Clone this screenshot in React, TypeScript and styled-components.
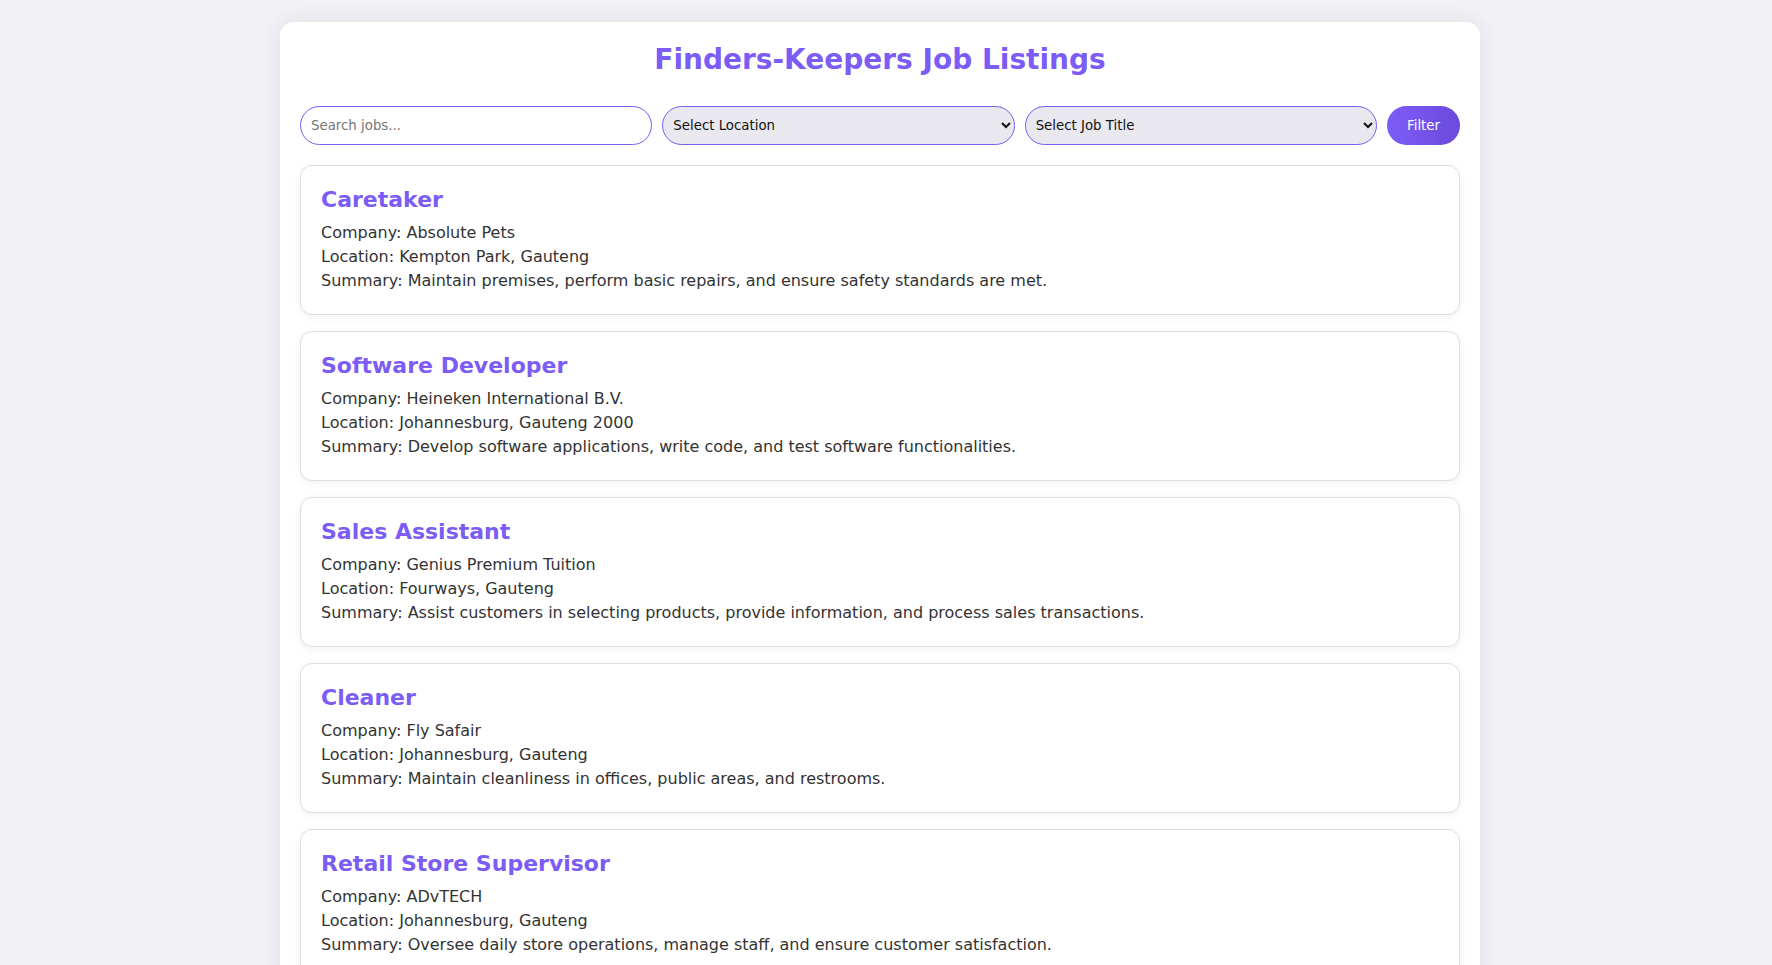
import React from "react";
import styled, { createGlobalStyle } from "styled-components";

const GlobalStyle = createGlobalStyle`
  html, body {
    margin: 0;
    padding: 0;
    background: #f1f1f6;
  }
  body {
    font-family: "DejaVu Sans", Verdana, sans-serif;
    color: #333;
  }
  * { box-sizing: border-box; }
`;

const Page = styled.div`
  padding: 22px 12px 40px 0;
`;

const Container = styled.main`
  max-width: 1200px;
  margin: 0 auto;
  background: #ffffff;
  border-radius: 14px;
  padding: 20px;
  box-shadow: 0 0 22px rgba(40, 30, 80, 0.09);
`;

const Title = styled.h1`
  margin: 1px 0 30px;
  text-align: center;
  font-size: 28px;
  font-weight: 700;
  color: #7c5cf6;
  line-height: normal;
`;

const FilterBar = styled.div`
  display: grid;
  grid-template-columns: minmax(0, 1fr) minmax(0, 1fr) minmax(0, 1fr) auto;
  gap: 10px;
  margin-bottom: 20px;
`;

const SearchInput = styled.input`
  width: 100%;
  height: 39px;
  padding: 0 10px;
  border: 1.5px solid #7a5cf0;
  border-radius: 20px;
  background: #fff;
  font-family: "DejaVu Sans", sans-serif;
  font-size: 13.333px;
  color: #333;
  outline: none;
  &::placeholder { color: #777; }
`;

const Select = styled.select`
  width: 100%;
  height: 39px;
  padding: 0 6px 0 6px;
  border: 1.5px solid #7a5cf0;
  border-radius: 20px;
  background-color: #e9e8ee;
  font-family: "DejaVu Sans", sans-serif;
  font-size: 13.333px;
  color: #111;
`;

const FilterButton = styled.button`
  height: 39px;
  padding: 0 20px;
  border: none;
  border-radius: 20px;
  background: linear-gradient(90deg, #7c5cf8, #6b4bdc);
  color: #fff;
  font-family: "DejaVu Sans", sans-serif;
  font-size: 13.333px;
  cursor: pointer;
`;

const JobList = styled.div`
  display: flex;
  flex-direction: column;
  gap: 16px;
`;

const Card = styled.article`
  border: 1px solid #dedde3;
  border-radius: 12px;
  padding: 21px 20px 21px;
  background: #fff;
  box-shadow: 0 2px 8px rgba(0, 0, 0, 0.06);
`;

const JobTitle = styled.h3`
  margin: 0 0 8px;
  font-size: 22px;
  font-weight: 700;
  color: #7c5cf6;
  line-height: 26px;
`;

const Detail = styled.p`
  margin: 0;
  font-size: 16px;
  line-height: 24px;
  color: #333;
`;

const jobs = [
  {
    title: "Caretaker",
    company: "Absolute Pets",
    location: "Kempton Park, Gauteng",
    summary: "Maintain premises, perform basic repairs, and ensure safety standards are met.",
  },
  {
    title: "Software Developer",
    company: "Heineken International B.V.",
    location: "Johannesburg, Gauteng 2000",
    summary: "Develop software applications, write code, and test software functionalities.",
  },
  {
    title: "Sales Assistant",
    company: "Genius Premium Tuition",
    location: "Fourways, Gauteng",
    summary: "Assist customers in selecting products, provide information, and process sales transactions.",
  },
  {
    title: "Cleaner",
    company: "Fly Safair",
    location: "Johannesburg, Gauteng",
    summary: "Maintain cleanliness in offices, public areas, and restrooms.",
  },
  {
    title: "Retail Store Supervisor",
    company: "ADvTECH",
    location: "Johannesburg, Gauteng",
    summary: "Oversee daily store operations, manage staff, and ensure customer satisfaction.",
  },
];

export default function App() {
  return (
    <>
      <GlobalStyle />
      <Page>
        <Container>
          <Title>Finders-Keepers Job Listings</Title>
          <FilterBar>
            <SearchInput placeholder="Search jobs..." />
            <Select defaultValue="">
              <option value="">Select Location</option>
              <option>Johannesburg, Gauteng</option>
              <option>Fourways, Gauteng</option>
              <option>Kempton Park, Gauteng</option>
            </Select>
            <Select defaultValue="">
              <option value="">Select Job Title</option>
              <option>Caretaker</option>
              <option>Software Developer</option>
              <option>Sales Assistant</option>
              <option>Cleaner</option>
            </Select>
            <FilterButton>Filter</FilterButton>
          </FilterBar>
          <JobList>
            {jobs.map((job) => (
              <Card key={job.title}>
                <JobTitle>{job.title}</JobTitle>
                <Detail>Company: {job.company}</Detail>
                <Detail>Location: {job.location}</Detail>
                <Detail>Summary: {job.summary}</Detail>
              </Card>
            ))}
          </JobList>
        </Container>
      </Page>
    </>
  );
}
